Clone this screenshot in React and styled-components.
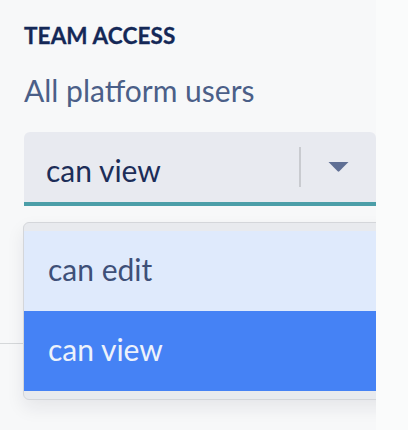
import { useState } from 'react';
import styled, { createGlobalStyle } from 'styled-components';

const GlobalStyle = createGlobalStyle`
    html, body {
        margin: 0;
        padding: 0;
        background: #fafbfb;
    }
    body {
        font-family: Lato, "Noto Sans", sans-serif;
    }
`;

const Page = styled.div`
    width: 376px;
    min-height: 430px;
    background: #f7f8f9;
    overflow: hidden;
`;

const Section = styled.section`
    padding: 22px 0 137px 24px;
`;

const SectionLabel = styled.div`
    font-size: 22.5px;
    line-height: 27px;
    font-weight: 700;
    letter-spacing: 0.1px;
    text-transform: uppercase;
    color: #142857;
    -webkit-text-stroke: 0.3px #142857;
`;

const Subtitle = styled.div`
    margin-top: 23px;
    font-size: 30px;
    line-height: 36px;
    color: #4b5f88;
`;

const SelectWrap = styled.div`
    position: relative;
    margin-top: 24px;
`;

const SelectBox = styled.div`
    display: flex;
    align-items: center;
    height: 74px;
    padding: 6px 0 0 22px;
    box-sizing: border-box;
    background: #e8eaf0;
    border-radius: 6px 6px 0 0;
    border-bottom: 4px solid #4b9ea8;
    cursor: pointer;
`;

const SelectValue = styled.span`
    flex: 1;
    font-size: 30px;
    line-height: 36px;
    color: #1c2d58;
`;

const Separator = styled.span`
    width: 2px;
    height: 40px;
    background: #c9cbd0;
    margin-top: -6px;
`;

const Caret = styled.span`
    display: flex;
    width: 75px;
    justify-content: center;
    margin-top: -6px;
    color: #5f6f94;
`;

const Menu = styled.ul`
    position: absolute;
    top: 90px;
    left: -1px;
    width: 390px;
    margin: 0;
    padding: 8px 0;
    list-style: none;
    background: #e8eaee;
    border: 1px solid #d4d6da;
    border-radius: 6px;
    box-shadow: 0 8px 18px rgba(20, 30, 50, 0.08);
    z-index: 10;
`;

const Option = styled.li`
    height: 80px;
    box-sizing: border-box;
    padding: 0 0 4px 24px;
    font-size: 30px;
    line-height: 76px;
    background: ${({ $selected }) => ($selected ? '#4582f5' : '#dfeafc')};
    color: ${({ $selected }) => ($selected ? '#edf2fb' : '#3e5078')};
    cursor: pointer;
`;

const Divider = styled.hr`
    margin: 0;
    border: none;
    border-top: 1px solid #d5d8da;
`;

const options = ['can edit', 'can view'];

export default function App() {
    const [value, setValue] = useState('can view');

    return (
        <>
            <GlobalStyle />
            <Page>
                <Section>
                    <SectionLabel>Team access</SectionLabel>
                    <Subtitle>All platform users</Subtitle>
                    <SelectWrap>
                        <SelectBox>
                            <SelectValue>{value}</SelectValue>
                            <Separator />
                            <Caret>
                                <svg width="21" height="10" viewBox="0 0 21 10">
                                    <path d="M0.5 0 H20.5 L11.3 9.3 Q10.5 10 9.7 9.3 Z" fill="currentColor" />
                                </svg>
                            </Caret>
                        </SelectBox>
                        <Menu>
                            {options.map((opt) => (
                                <Option key={opt} $selected={opt === value} onClick={() => setValue(opt)}>
                                    {opt}
                                </Option>
                            ))}
                        </Menu>
                    </SelectWrap>
                </Section>
                <Divider />
            </Page>
        </>
    );
}
